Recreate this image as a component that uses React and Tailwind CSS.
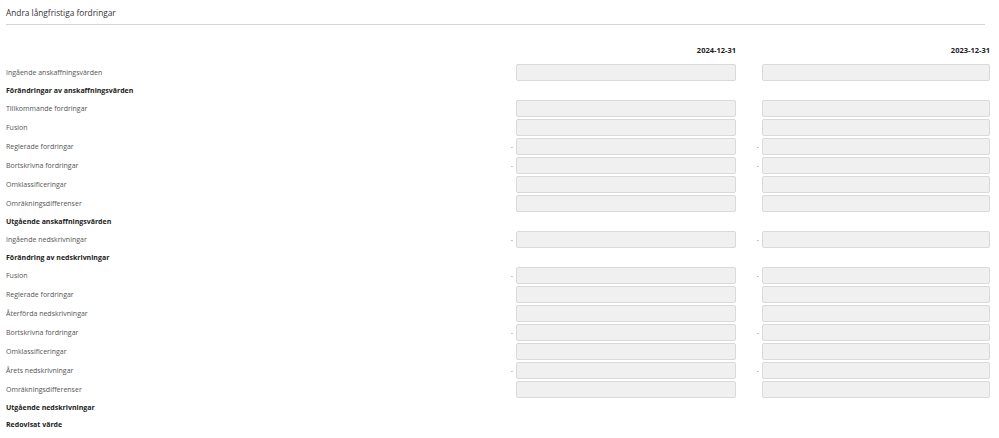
const rows = [
  { label: "Ingående anskaffningsvärden", input: true },
  { label: "Förändringar av anskaffningsvärden", bold: true },
  { label: "Tillkommande fordringar", input: true },
  { label: "Fusion", input: true },
  { label: "Reglerade fordringar", input: true, minus: true },
  { label: "Bortskrivna fordringar", input: true, minus: true },
  { label: "Omklassificeringar", input: true },
  { label: "Omräkningsdifferenser", input: true },
  { label: "Utgående anskaffningsvärden", bold: true },
  { label: "Ingående nedskrivningar", input: true, minus: true },
  { label: "Förändring av nedskrivningar", bold: true },
  { label: "Fusion", input: true, minus: true },
  { label: "Reglerade fordringar", input: true },
  { label: "Återförda nedskrivningar", input: true },
  { label: "Bortskrivna fordringar", input: true, minus: true },
  { label: "Omklassificeringar", input: true },
  { label: "Årets nedskrivningar", input: true, minus: true },
  { label: "Omräkningsdifferenser", input: true },
  { label: "Utgående nedskrivningar", bold: true },
  { label: "Redovisat värde", bold: true },
];

const inputCls = "h-[17px] bg-[#f0f0f0] border border-[#d9d9d9] rounded-[2px]";

function Cell({ width, minus }) {
  return <div className="flex items-center">
      <span className="w-[10px] text-[7px] text-[#888] text-right pr-[3px] leading-none">{minus ? "-" : ""}</span>
      <div className={inputCls} style={{ width }} />
    </div>;
}

export default function App() {
  return <div className="w-[999px] min-h-[438px] bg-white font-['Open_Sans',sans-serif]">
      <div className="px-[6px] pt-[6px]">
        <div className="text-[8.3px] text-[#333] h-[14px] leading-[14px]">Andra långfristiga fordringar</div>
        <div className="mt-[4px] border-b border-[#d4d4d4] mr-[8px]" />
      </div>
      <div className="pl-[6px] pr-[9px] pt-[20px]">
        <div className="flex items-center h-[12px] mb-[6px]">
          <div className="flex-1" />
          <div className="w-[230px] text-right text-[7.5px] font-bold text-[#222]">2024-12-31</div>
          <div className="w-[16px]" />
          <div className="w-[238px] text-right text-[7.5px] font-bold text-[#222]">2023-12-31</div>
        </div>
        {rows.map((r, i) => <div key={i} className={`flex items-center ${r.input ? "h-[19px]" : "h-[17px]"}`}>
            <div className={`flex-1 pt-[2px] text-[7px] ${r.bold ? "font-bold text-[#222]" : "text-[#555]"}`}>{r.label}</div>
            {r.input && <>
                <Cell width={220} minus={r.minus} />
                <div className="w-[16px]" />
                <Cell width={228} minus={r.minus} />
              </>}
          </div>)}
      </div>
    </div>;
}
